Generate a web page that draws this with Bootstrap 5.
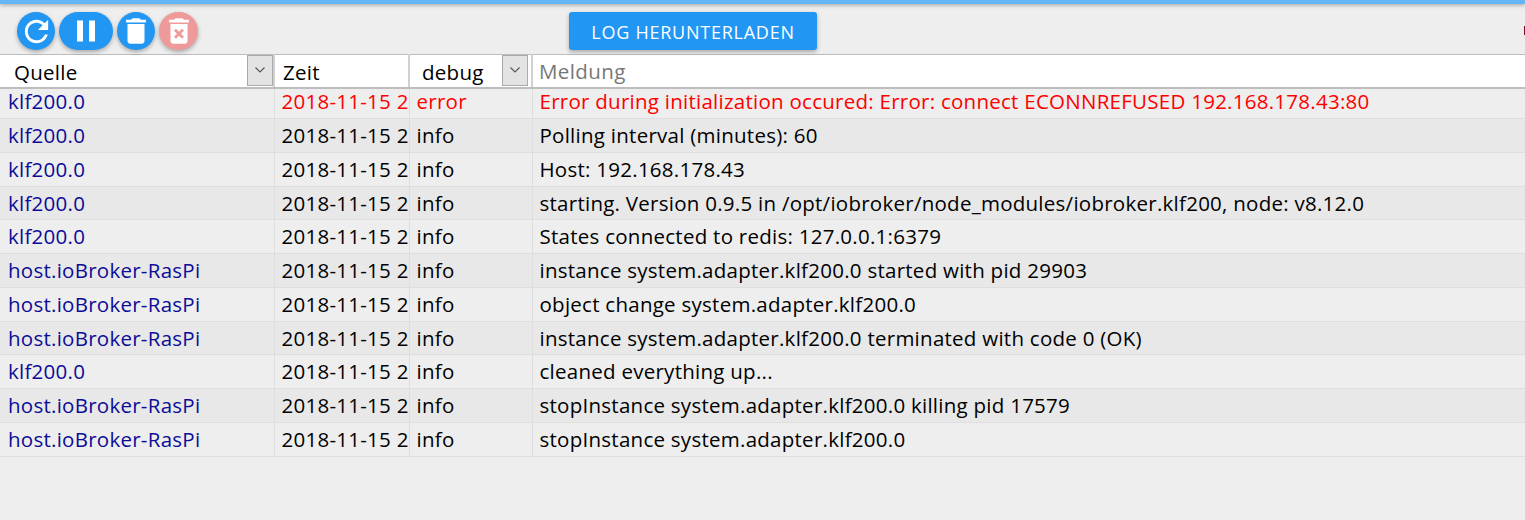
<!DOCTYPE html>
<html lang="de">
<head>
<meta charset="utf-8">
<title>Log</title>
<link rel="stylesheet" href="https://cdn.jsdelivr.net/npm/bootstrap@5.3.0/dist/css/bootstrap.min.css">
<style>
html,body{height:100%;}
body{background:#eee;font-family:"Open Sans","Noto Sans",sans-serif;font-size:20.5px;letter-spacing:.26px;color:#000;overflow:hidden;}
.topline{height:4px;background:#64b5f6;box-shadow:0 1px 4px rgba(0,0,0,.35);}
.toolbar{height:50px;padding-left:17px;}
.toolbtns{gap:4px;padding-top:8px;}
.rbtn{height:38px;width:38px;border:0;padding:0;border-radius:19px;background:#2196f3;color:#fff;box-shadow:0 2px 4px rgba(0,0,0,.3);}
.rbtn.widebtn{width:54px;}
.rbtn.offbtn{background:#ef9a9a;width:39px;}
.rbtn svg{fill:currentColor;display:block;margin:auto;}
.offbtn svg{fill:#fff;}
.dlbtn{position:absolute;left:569px;top:12px;width:248px;height:38px;padding:2px 0 0;background:#2196f3;border:0;border-radius:3px;color:#fff;font-size:18px;letter-spacing:.75px;text-transform:uppercase;box-shadow:0 2px 4px rgba(0,0,0,.3);}
.dlbtn:hover{background:#2196f3;color:#fff;}
.edgemark{position:absolute;right:0;top:26px;width:1px;height:9px;background:#7a0c2e;}
.logtable{table-layout:fixed;width:100%;margin:0;border-collapse:collapse;--bs-table-bg:transparent;--bs-table-color:#000;}
.logtable th,.logtable td{padding:0;font-weight:400;white-space:nowrap;overflow:hidden;vertical-align:middle;}
.logtable thead th{height:33px;background:#fff;border-top:1px solid #bdbdbd;border-bottom:2px solid #bdbdbd;border-right:2px solid #d0d0d0;line-height:31px;}
.logtable thead th:last-child{border-right:0;}
.logtable tbody td{height:33.75px;border-bottom:1px solid #dedede;border-right:1px solid #dedede;padding-left:7px;line-height:1;}
.logtable tbody tr:first-child td{height:31px;padding-bottom:4px;}
.logtable tbody td:nth-child(1){padding-left:8px;color:#0c0c98;}
.logtable tbody td:last-child{border-right:0;}
.logtable tbody tr:nth-child(even) td{background:#e8e8e8;}
.logtable tbody tr.errrow td:not(:first-child){color:#f00;}
.headcell{height:31px;}
.headlabel{flex:1 1 auto;min-width:0;padding-top:3px;}
.arrowbox{flex:0 0 26px;height:31px;background:#e3e3e3;border:1px solid #aaa;}
.arrowbox svg{display:block;margin:10px auto 0;}
.debugarrow{margin-right:3px;}
.searchfield{height:31px;border:0;border-radius:0;padding:0 0 0 6px;font-size:20.5px;letter-spacing:.4px;background:#fff;box-shadow:none;}
.searchfield::placeholder{color:#777;}
.quellelabel{padding-left:14px;}
.zeitlabel{padding-left:8px;}
.debuglabel{padding-left:12px;}
</style>
</head>
<body>
<div class="topline"></div>
<div class="toolbar position-relative">
  <div class="toolbtns d-flex">
    <button class="rbtn" type="button" aria-label="Aktualisieren"><svg width="35" height="35" viewBox="0 0 24 24"><path d="M17.65 6.35C16.2 4.9 14.21 4 12 4c-4.42 0-7.99 3.58-7.99 8s3.57 8 7.99 8c3.73 0 6.84-2.55 7.73-6h-2.08c-.82 2.33-3.04 4-5.65 4-3.31 0-6-2.69-6-6s2.69-6 6-6c1.66 0 3.14.69 4.22 1.78L13 11h7V4l-2.35 2.35z"/></svg></button>
    <button class="rbtn widebtn" type="button" aria-label="Pause"><svg width="36" height="36" viewBox="0 0 24 24"><path d="M6 19h4V5H6v14zm8-14v14h4V5h-4z"/></svg></button>
    <button class="rbtn" type="button" aria-label="Löschen"><svg width="34" height="34" viewBox="0 0 24 24"><path d="M6 19c0 1.1.9 2 2 2h8c1.1 0 2-.9 2-2V7H6v12zM19 4h-3.5l-1-1h-5l-1 1H5v2h14V4z"/></svg></button>
    <button class="rbtn offbtn" type="button" aria-label="Endgültig löschen"><svg width="34" height="34" viewBox="0 0 24 24"><path d="M6 19c0 1.1.9 2 2 2h8c1.1 0 2-.9 2-2V7H6v12zm2.46-7.12l1.41-1.41L12 12.59l2.12-2.12 1.41 1.41L13.41 14l2.12 2.12-1.41 1.41L12 15.41l-2.12 2.12-1.41-1.41L10.59 14l-2.13-2.12zM15.5 4l-1-1h-5l-1 1H5v2h14V4z"/></svg></button>
  </div>
</div>
<button class="btn dlbtn" type="button">Log herunterladen</button>
<div class="edgemark"></div>
<table class="table logtable">
  <colgroup><col style="width:274px"><col style="width:135px"><col style="width:123px"><col></colgroup>
  <thead>
    <tr>
      <th><div class="headcell d-flex align-items-center"><span class="headlabel quellelabel">Quelle</span><span class="arrowbox"><svg width="12" height="8" viewBox="0 0 12 8"><path d="M1.5 1.5 6 6l4.5-4.5" fill="none" stroke="#555" stroke-width="1.1"/></svg></span></div></th>
      <th><div class="headcell d-flex align-items-center"><span class="headlabel zeitlabel">Zeit</span></div></th>
      <th><div class="headcell d-flex align-items-center"><span class="headlabel debuglabel">debug</span><span class="arrowbox debugarrow"><svg width="12" height="8" viewBox="0 0 12 8"><path d="M1.5 1.5 6 6l4.5-4.5" fill="none" stroke="#555" stroke-width="1.1"/></svg></span></div></th>
      <th><input class="form-control searchfield" type="text" placeholder="Meldung"></th>
    </tr>
  </thead>
  <tbody>
    <tr class="errrow"><td>klf200.0</td><td>2018-11-15 20:14:11</td><td>error</td><td>Error during initialization occured: Error: connect ECONNREFUSED 192.168.178.43:80</td></tr>
    <tr><td>klf200.0</td><td>2018-11-15 20:14:11</td><td>info</td><td>Polling interval (minutes): 60</td></tr>
    <tr><td>klf200.0</td><td>2018-11-15 20:14:11</td><td>info</td><td>Host: 192.168.178.43</td></tr>
    <tr><td>klf200.0</td><td>2018-11-15 20:14:11</td><td>info</td><td>starting. Version 0.9.5 in /opt/iobroker/node_modules/iobroker.klf200, node: v8.12.0</td></tr>
    <tr><td>klf200.0</td><td>2018-11-15 20:14:11</td><td>info</td><td>States connected to redis: 127.0.0.1:6379</td></tr>
    <tr><td>host.ioBroker-RasPi</td><td>2018-11-15 20:14:10</td><td>info</td><td>instance system.adapter.klf200.0 started with pid 29903</td></tr>
    <tr><td>host.ioBroker-RasPi</td><td>2018-11-15 20:14:07</td><td>info</td><td>object change system.adapter.klf200.0</td></tr>
    <tr><td>host.ioBroker-RasPi</td><td>2018-11-15 20:14:07</td><td>info</td><td>instance system.adapter.klf200.0 terminated with code 0 (OK)</td></tr>
    <tr><td>klf200.0</td><td>2018-11-15 20:14:07</td><td>info</td><td>cleaned everything up...</td></tr>
    <tr><td>host.ioBroker-RasPi</td><td>2018-11-15 20:14:05</td><td>info</td><td>stopInstance system.adapter.klf200.0 killing pid 17579</td></tr>
    <tr><td>host.ioBroker-RasPi</td><td>2018-11-15 20:14:05</td><td>info</td><td>stopInstance system.adapter.klf200.0</td></tr>
  </tbody>
</table>
<script src="https://cdn.jsdelivr.net/npm/bootstrap@5.3.0/dist/js/bootstrap.bundle.min.js"></script>
</body>
</html>
